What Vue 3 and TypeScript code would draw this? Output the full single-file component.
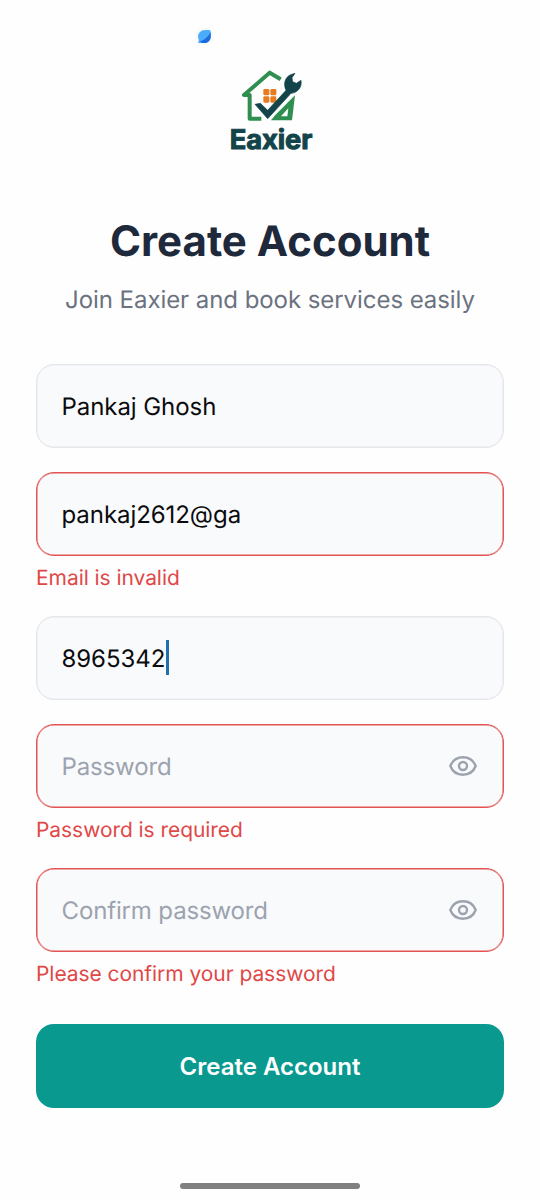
<script setup lang="ts">
import { reactive } from 'vue'

interface Field {
  id: string
  value: string
  placeholder: string
  error: string
  secret: boolean
  focused: boolean
}

const fields = reactive<Field[]>([
  { id: 'name', value: 'Pankaj Ghosh', placeholder: 'Full name', error: '', secret: false, focused: false },
  { id: 'email', value: 'pankaj2612@ga', placeholder: 'Email', error: 'Email is invalid', secret: false, focused: false },
  { id: 'phone', value: '8965342', placeholder: 'Phone', error: '', secret: false, focused: true },
  { id: 'password', value: '', placeholder: 'Password', error: 'Password is required', secret: true, focused: false },
  { id: 'confirm', value: '', placeholder: 'Confirm password', error: 'Please confirm your password', secret: true, focused: false },
])
</script>

<template>
  <main class="screen">
    <header class="status">
      <svg class="status-icon" viewBox="0 0 17 17" aria-hidden="true">
        <rect width="17" height="17" rx="6" fill="#f8faf8" />
        <path d="M2 9C2 5 5 2 9 2H13.500L14.700 3.500V8.500c0 4-2.800 6.600-6.500 6.600H2.200L2.800 12Z" fill="#4cacf9" />
        <path d="M14.700 4V8.500c0 4-2.800 6.600-6.500 6.600C6.500 15.100 5 14.500 4 13.500C8 12.500 12 9 14.700 4Z" fill="#1b6ae0" />
      </svg>
    </header>

    <svg class="logo" viewBox="0 0 300 300" role="img" aria-label="Eaxier">
      <path
        d="M182 58 149 38 72 105H89V176H124"
        fill="none"
        stroke="#2f8f50"
        stroke-width="12"
        stroke-linejoin="round"
      />
      <path d="M225 106 216 181H153L166 165Z" fill="#2f8f50" />
      <path d="M205 145 202 169H183Z" fill="#fefefe" />
      <g fill="#e77b22">
        <rect x="130" y="87" width="18" height="19" rx="4" />
        <rect x="151" y="87" width="18" height="19" rx="4" />
        <rect x="130" y="109" width="18" height="19" rx="4" />
        <rect x="151" y="109" width="18" height="19" rx="4" />
      </g>
      <path
        d="M105 133 121 130 143 151 198 91C190 73 193 53 212 44L225 40 216 53 218 65 229 70 243 61C247 81 233 99 213 100L143 176Z"
        fill="#124449"
        stroke="#124449"
        stroke-width="2"
      />
      <text x="29" y="266" textLength="248" lengthAdjust="spacing" class="logo-name">Eaxier</text>
    </svg>

    <h1 class="title">Create Account</h1>
    <p class="subtitle">Join Eaxier and book services easily</p>

    <form class="form" @submit.prevent>
      <div v-for="field in fields" :key="field.id" class="field">
        <div class="box" :class="{ invalid: field.error }">
          <span class="value" :class="{ placeholder: !field.value }">{{ field.value || field.placeholder }}</span>
          <span v-if="field.focused" class="caret"></span>
          <svg v-if="field.secret" class="eye" viewBox="0 0 30 24" aria-hidden="true">
            <path d="M2.300 12C4.500 6.500 9.200 3.300 15 3.300S25.500 6.500 27.700 12C25.500 17.500 20.800 20.700 15 20.700S4.500 17.500 2.300 12Z" />
            <circle cx="15" cy="12" r="4" />
          </svg>
        </div>
        <p v-if="field.error" class="error">{{ field.error }}</p>
      </div>
      <button class="submit" type="submit">Create Account</button>
    </form>

    <div class="home-bar"></div>
  </main>
</template>

<style>
body {
  margin: 0;
  background: #fefefe;
}
</style>

<style scoped>
.screen {
  box-sizing: border-box;
  display: flex;
  flex-direction: column;
  width: 540px;
  height: 1200px;
  padding: 0 36px;
  overflow: hidden;
  background: #fefefe;
  font-family: Inter, "Liberation Sans", sans-serif;
  text-rendering: geometricPrecision;
}

.status {
  height: 60px;
  box-sizing: border-box;
  padding: 28px 0 0 160px;
}

.status-icon {
  display: block;
  width: 17px;
  height: 17px;
}

.logo {
  display: block;
  flex: none;
  width: 100px;
  height: 100px;
  margin-left: 184px;
}

.logo-name {
  font-family: Inter, sans-serif;
  font-size: 82px;
  font-weight: 700;
  fill: #124449;
  stroke: #124449;
  stroke-width: 3;
}

.title {
  margin: 56px 0 0;
  font-size: 42px;
  line-height: 52px;
  font-weight: 700;
  text-align: center;
  color: #1e293b;
  white-space: nowrap;
}

.subtitle {
  margin: 14px 0 0;
  font-size: 24px;
  line-height: 36px;
  letter-spacing: -0.06px;
  text-align: center;
  color: #6b7280;
  white-space: nowrap;
}

.form {
  display: flex;
  flex-direction: column;
  gap: 24px;
  margin-top: 46px;
}

.box {
  box-sizing: border-box;
  display: flex;
  align-items: center;
  height: 84px;
  padding: 0 25px 0 24.500px;
  border: 1px solid #e5e7eb;
  border-radius: 18px;
  background: #f9fafc;
  box-shadow: inset 0 0 0 0.5px #e5e7eb;
}

.box.invalid {
  border-color: #e35353;
  box-shadow: inset 0 0 0 0.5px #e35353;
}

.value {
  padding-top: 1px;
  font-size: 24px;
  line-height: 36px;
  letter-spacing: -0.06px;
  color: #0b0b0d;
  white-space: pre;
}

.value.placeholder {
  letter-spacing: -0.14px;
  color: #9ca3af;
}

.caret {
  width: 3px;
  height: 35px;
  margin: 0 0 1px 0.500px;
  background: #1f70ab;
}

.eye {
  width: 30px;
  height: 24px;
  margin-left: auto;
  fill: none;
  stroke: #9ca3af;
  stroke-width: 2.400;
  stroke-linejoin: round;
}

.error {
  margin: 8px 0 -2px;
  font-size: 21px;
  line-height: 30px;
  letter-spacing: -0.06px;
  color: #e04848;
  white-space: nowrap;
}

.submit {
  height: 84px;
  margin-top: 12px;
  padding: 0;
  border: 0;
  border-radius: 18px;
  background: #0a998f;
  color: #fff;
  font-family: inherit;
  font-size: 24px;
  font-weight: 600;
}

.home-bar {
  flex: none;
  align-self: center;
  width: 180px;
  height: 6px;
  margin-top: 75px;
  border-radius: 3px;
  background: #808080;
}
</style>
